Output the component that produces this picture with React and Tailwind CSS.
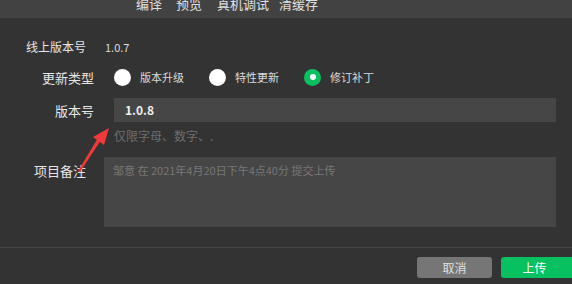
import React from 'react';

const font = { fontFamily: '"Microsoft YaHei", "Noto Sans CJK SC", "Liberation Sans", sans-serif' };

function Radio({ checked, label, className = '' }) {
    return (
        <div className={`flex items-center ${className}`}>
            {checked ? (
                <span className="w-[17px] h-[17px] rounded-full bg-[#07c160] flex items-center justify-center">
                    <span className="w-[6px] h-[6px] rounded-full bg-white" />
                </span>
            ) : (
                <span className="w-[17px] h-[17px] rounded-full bg-white" />
            )}
            <span className="ml-[9px] text-[11px] text-[#dcdcdc]">{label}</span>
        </div>
    );
}

export default function App() {
    return (
        <div className="relative w-[572px] h-[284px] bg-[#333333] overflow-hidden text-[#e6e6e6]" style={font}>
            {/* Toolbar (scrolled, top half hidden) */}
            <div className="h-[18px] bg-[#424242] overflow-hidden">
                <div className="flex text-[13px] leading-none text-[#e0e0e0] -mt-[3px] pl-[136px]">
                    <span>编译</span>
                    <span className="ml-[14px]">预览</span>
                    <span className="ml-[15px]">真机调试</span>
                    <span className="ml-[10px]">清缓存</span>
                </div>
            </div>

            {/* Form */}
            <div className="flex flex-col">
                <div className="flex items-center h-[16px] mt-[21px]">
                    <span className="w-[86px] pl-[26px] text-[12px] leading-none">线上版本号</span>
                    <span className="ml-[19px] text-[11px] text-[#dcdcdc]">1.0.7</span>
                </div>

                <div className="flex items-center h-[20px] mt-[12px]">
                    <span className="w-[94px] text-right text-[13px] leading-none">更新类型</span>
                    <Radio className="ml-[20px]" label="版本升级" />
                    <Radio className="ml-[25px]" label="特性更新" />
                    <Radio className="ml-[25px]" checked label="修订补丁" />
                </div>

                <div className="flex items-center mt-[11px]">
                    <span className="w-[94px] text-right text-[13px] leading-none">版本号</span>
                    <div className="ml-[20px] w-[442px] h-[24px] bg-[#464646] flex items-center pl-[11px] text-[12px] font-bold text-[#f0f0f0]">
                        1.0.8
                    </div>
                </div>

                <div className="ml-[114px] mt-[8px] text-[12px] text-[#6e6e6e] leading-none">仅限字母、数字、.</div>

                <div className="flex mt-[15px]">
                    <span className="w-[86px] text-right text-[13px] leading-none mt-[7px]">项目备注</span>
                    <div className="ml-[18px] w-[452px] h-[70px] bg-[#464646] px-[9px] pt-[5px] text-[11px] text-[#777777]">
                        邹意 在 2021年4月20日下午4点40分 提交上传
                    </div>
                </div>

                <div className="mt-[20px] h-[1px] bg-[#444444]" />

                <div className="flex justify-end mt-[9px]">
                    <button className="w-[75px] h-[21px] rounded-[3px] bg-[#767676] text-[12px] text-[#e0e0e0] leading-none">取消</button>
                    <button className="ml-[9px] w-[71px] h-[21px] rounded-l-[3px] bg-[#07c160] text-[12px] text-white leading-none pr-[4px]">上传</button>
                </div>
            </div>

            {/* Annotation arrow */}
            <svg className="absolute left-0 top-0" width="572" height="284" viewBox="0 0 572 284">
                <polygon points="78,171 80,172 101,140 98,138" fill="#f03a3a" />
                <polygon points="109,128 104,145 93,137" fill="#f03a3a" />
            </svg>
        </div>
    );
}
